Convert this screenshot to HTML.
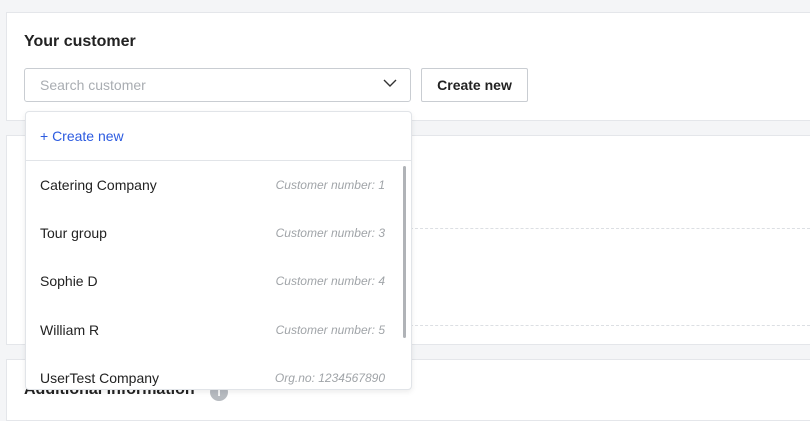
<!DOCTYPE html>
<html><head><style>
body{margin:0;width:810px;height:404px;overflow:hidden;background:#f4f5f7;font-family:"Liberation Sans",sans-serif;position:relative}
.card{position:absolute;left:6px;right:-10px;background:#fff;border:1px solid #e4e6ea}
.h{position:absolute;font-weight:bold;font-size:16px;color:#222}
.dash{position:absolute;left:410px;right:0;border-top:1px dashed #dcdfe3}
.dd{position:absolute;left:25px;top:111px;width:385px;height:277px;background:#fff;border:1px solid #e1e4e8;border-radius:4px;box-shadow:0 2px 6px rgba(0,0,0,.08);overflow:hidden}
.row{position:absolute;left:14px;right:26px;font-size:14px;color:#222}
.row i{position:absolute;right:0;top:1px;font-size:12px;color:#a0a4a8}
</style></head><body>
<div class="card" style="top:12px;height:107px"></div>
<div class="h" style="left:24px;top:33px">Your customer</div>
<div style="position:absolute;left:24px;top:68px;width:385px;height:32px;border:1px solid #c9cdd2;border-radius:3px;background:#fff">
<span style="position:absolute;left:15px;top:8px;font-size:14px;color:#a9adb2">Search customer</span>
<svg style="position:absolute;left:358px;top:10px" width="14" height="9" viewBox="0 0 14 9"><path d="M1 1l6 6 6-6" fill="none" stroke="#333" stroke-width="1.4"/></svg>
</div>
<div style="position:absolute;left:421px;top:68px;width:105px;height:32px;border:1px solid #c9cdd2;border-radius:2px;background:#fff;font-size:14px;font-weight:bold;color:#222;text-align:center;line-height:32px">Create new</div>
<div class="card" style="top:135px;height:208px"></div>
<div class="dash" style="top:228px"></div>
<div class="dash" style="top:325px"></div>
<div class="card" style="top:359px;height:60px"></div>
<div class="h" style="left:24px;top:381px">Additional information</div>
<div style="position:absolute;left:210px;top:383px;width:18px;height:18px;border-radius:50%;background:#b7bbc0;color:#fff;font-weight:bold;font-size:12px;text-align:center;line-height:18px">i</div>
<div class="dd">
<div style="position:absolute;left:14px;top:16px;font-size:14px;color:#2c5be0">+ Create new</div>
<div style="position:absolute;left:0;right:0;top:48px;border-top:1px solid #e1e4e8"></div>
<div style="position:absolute;left:377px;top:54px;width:3px;height:172px;background:#b0b3b7;border-radius:2px"></div>
<div class="row" style="top:65px">Catering Company<i>Customer number: 1</i></div>
<div class="row" style="top:113px">Tour group<i>Customer number: 3</i></div>
<div class="row" style="top:161px">Sophie D<i>Customer number: 4</i></div>
<div class="row" style="top:210px">William R<i>Customer number: 5</i></div>
<div class="row" style="top:258px">UserTest Company<i>Org.no: 1234567890</i></div>
</div>
</body></html>
